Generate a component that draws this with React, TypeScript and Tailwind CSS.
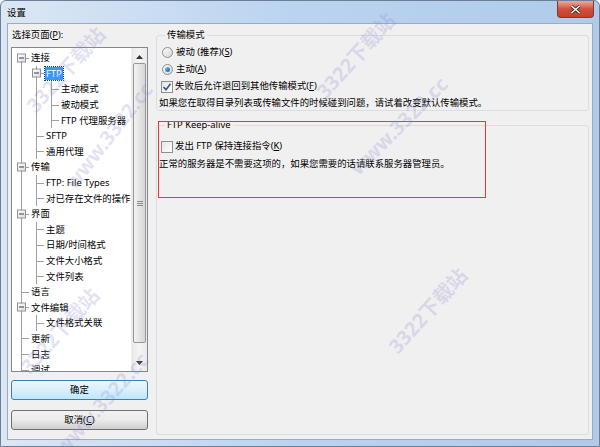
import React from 'react';

type Row = {
  label: string;
  level: number;
  expanded?: boolean;
  first?: boolean;
  last?: boolean;
  pass?: boolean[];
  selected?: boolean;
};

const ROWS: Row[] = [
  { label: '连接', level: 0, expanded: true, first: true },
  { label: 'FTP', level: 1, expanded: true, pass: [true], selected: true },
  { label: '主动模式', level: 2, pass: [true, true] },
  { label: '被动模式', level: 2, pass: [true, true] },
  { label: 'FTP 代理服务器', level: 2, pass: [true, true], last: true },
  { label: 'SFTP', level: 1, pass: [true] },
  { label: '通用代理', level: 1, pass: [true], last: true },
  { label: '传输', level: 0, expanded: true },
  { label: 'FTP: File Types', level: 1, pass: [true] },
  { label: '对已存在文件的操作', level: 1, pass: [true], last: true },
  { label: '界面', level: 0, expanded: true },
  { label: '主题', level: 1, pass: [true] },
  { label: '日期/时间格式', level: 1, pass: [true] },
  { label: '文件大小格式', level: 1, pass: [true] },
  { label: '文件列表', level: 1, pass: [true], last: true },
  { label: '语言', level: 0 },
  { label: '文件编辑', level: 0, expanded: true },
  { label: '文件格式关联', level: 1, pass: [true], last: true },
  { label: '更新', level: 0 },
  { label: '日志', level: 0 },
  { label: '调试', level: 0, last: true },
];

// watermark stamps over the screenshot
const MARKS = [
  { text: '3322下载站', x: 118, y: 84, r: -48 },
  { text: 'www.3322.cc', x: 172, y: 150, r: -52 },
  { text: '3322下载站', x: 408, y: 70, r: -48 },
  { text: 'www.3322.cc', x: 462, y: 140, r: -45 },
  { text: '3322下载站', x: 112, y: 345, r: -48 },
  { text: 'www.3322.cc', x: 165, y: 418, r: -48 },
  { text: '3322下载站', x: 480, y: 325, r: -48 },
];

const font = "font-['Noto_Sans','Noto_Sans_CJK_SC',sans-serif]";

function Expander() {
  return (
    <span className="absolute left-[3px] top-1/2 -translate-y-1/2 w-[9px] h-[9px] border border-[#919191] bg-gradient-to-br from-white to-[#dcdcdc] flex items-center justify-center">
      <span className="w-[5px] h-px bg-[#2b3f5e]" />
    </span>
  );
}

function TreeRow({ row }: { row: Row }) {
  return (
    <div className="flex h-[15.6px] items-center">
      {Array.from({ length: row.level }).map((_, i) => (
        <div key={i} className="relative w-[15px] h-full shrink-0">
          {row.pass?.[i] && <div className="absolute left-[7px] top-0 bottom-0 w-px bg-[#a0a0a0]" />}
        </div>
      ))}
      <div className="relative w-[15px] h-full shrink-0">
        <div
          className={`absolute left-[7px] w-px bg-[#a0a0a0] ${row.first ? 'top-1/2' : 'top-0'} ${row.last ? 'bottom-0' : 'bottom-0'}`}
        />
        <div className="absolute left-[7px] right-0 top-1/2 h-px bg-[#a0a0a0]" />
        {row.expanded && <Expander />}
      </div>
      <span
        className={`ml-px px-[1px] leading-[13px] whitespace-nowrap ${
          row.selected ? 'bg-[#3399ff] text-white outline outline-1 outline-dotted outline-[#0b3f7a]' : 'text-black'
        }`}
      >
        {row.label}
      </span>
    </div>
  );
}

function Radio({ checked }: { checked?: boolean }) {
  return (
    <span className="w-[11px] h-[11px] shrink-0 rounded-full border border-[#8e8f8f] bg-gradient-to-br from-[#fafafa] to-[#d8d8d8] flex items-center justify-center">
      {checked && <span className="w-[5px] h-[5px] rounded-full bg-gradient-to-br from-[#7fcaf2] to-[#0c57a5]" />}
    </span>
  );
}

function Check({ checked }: { checked?: boolean }) {
  return (
    <span className="w-[12px] h-[12px] shrink-0 border border-[#8e8f8f] bg-gradient-to-br from-[#e4e4e4] to-white flex items-center justify-center">
      {checked && (
        <svg width="10" height="10" viewBox="0 0 10 10">
          <path d="M1.5 5 L4 7.8 L8.5 1.8" fill="none" stroke="#3d5287" strokeWidth="1.6" />
        </svg>
      )}
    </span>
  );
}

function ScrollArrow({ down }: { down?: boolean }) {
  return (
    <div className="h-[17px] flex items-center justify-center">
      <svg width="7" height="4" viewBox="0 0 7 4">
        <path d={down ? 'M0 0 L7 0 L3.5 4 Z' : 'M0 4 L7 4 L3.5 0 Z'} fill="#333" />
      </svg>
    </div>
  );
}

export default function App() {
  return (
    <div className={`relative w-[600px] h-[447px] overflow-hidden flex flex-col bg-gradient-to-r from-[#dbe7f4] via-[#b9d3f0] to-[#b0cbea] border border-[#6d7f96] rounded-t-[6px] text-[9.4px] ${font}`}>
      {/* title bar */}
      <div className="h-[22px] flex items-start justify-between shrink-0">
        <span className="pl-[6px] pt-[6px] leading-[12px] text-black">设置</span>
        <div className="mr-[5px] w-[37px] h-[17px] rounded-b-[4px] border border-t-0 border-[#7a3a36] bg-gradient-to-b from-[#e9a99b] via-[#d0513d] to-[#c23f2b] flex items-center justify-center">
          <svg width="11" height="9" viewBox="0 0 11 9">
            <path d="M1.5 1 L9.5 8 M9.5 1 L1.5 8" stroke="#4a1d17" strokeWidth="3" />
            <path d="M1.5 1 L9.5 8 M9.5 1 L1.5 8" stroke="#fff" strokeWidth="1.6" />
          </svg>
        </div>
      </div>

      {/* client area */}
      <div className="mx-[6px] mb-[6px] flex-1 flex bg-[#f0f0f0] border border-[#9aabc2] pl-[3px] pr-[3px] pt-[5px] pb-[4px] gap-[8px]">
        {/* left column */}
        <div className="w-[137px] flex flex-col shrink-0">
          <div className="leading-[12px] h-[12px] pl-px">选择页面(<u>P</u>):</div>
          <div className="mt-[6px] h-[325px] flex border border-[#828790] bg-white">
            <div className="flex-1 overflow-hidden pl-[2px] pt-[2px]">
              {ROWS.map((r) => (
                <TreeRow key={r.label} row={r} />
              ))}
            </div>
            <div className="w-[16px] flex flex-col bg-gradient-to-r from-[#e9e9e9] via-[#f4f4f4] to-[#e9e9e9] border-l border-[#ececec]">
              <ScrollArrow />
              <div className="mx-[1px] h-[280px] -mt-[2px] rounded-[2px] border border-[#979797] bg-gradient-to-r from-[#f3f3f3] to-[#d6d6d6] flex flex-col items-center justify-center gap-[1px]">
                <span className="w-[6px] h-px bg-[#8a8a8a]" />
                <span className="w-[6px] h-px bg-[#8a8a8a]" />
                <span className="w-[6px] h-px bg-[#8a8a8a]" />
              </div>
              <div className="flex-1" />
              <ScrollArrow down />
            </div>
          </div>
          <button className="mt-[8px] h-[20px] rounded-[3px] border border-[#3c7fb1] bg-gradient-to-b from-[#eaf6fd] via-[#d9f0fc] to-[#bee6fd] text-black leading-[12px]">
            确定
          </button>
          <button className="mt-[10px] h-[20px] rounded-[3px] border border-[#707070] bg-gradient-to-b from-[#f2f2f2] via-[#ebebeb] to-[#cfcfcf] text-black leading-[12px]">
            取消(<u>C</u>)
          </button>
        </div>

        {/* right column */}
        <div className="flex-1 flex flex-col">
          <fieldset className="border border-[#d5dfe5] rounded-[3px] h-[82px] px-[5px] pt-[3px]">
            <legend className="ml-[3px] px-[2px] leading-[12px]">传输模式</legend>
            <div className="flex items-center gap-[3px] h-[17px]">
              <Radio />
              <span>被动 (推荐)(<u>S</u>)</span>
            </div>
            <div className="flex items-center gap-[3px] h-[17px]">
              <Radio checked />
              <span>主动(<u>A</u>)</span>
            </div>
            <div className="flex items-center gap-[2px] h-[17px] -ml-px">
              <Check checked />
              <span>失败后允许退回到其他传输模式(<u>F</u>)</span>
            </div>
            <div className="h-[16px] flex items-center -ml-[3px]">
              如果您在取得目录列表或传输文件的时候碰到问题，请试着改变默认传输模式。
            </div>
          </fieldset>
          <fieldset className="mt-[8px] flex-1 border border-[#d5dfe5] rounded-[3px] px-[5px]">
            <legend className="ml-[3px] px-[2px] leading-[12px]">FTP Keep-alive</legend>
            <div className="flex items-center gap-[2px] h-[17px] mt-[7px] -ml-px">
              <Check />
              <span>发出 FTP 保持连接指令(<u>K</u>)</span>
            </div>
            <div className="h-[18px] flex items-center -ml-[3px]">
              正常的服务器是不需要这项的，如果您需要的话请联系服务器管理员。
            </div>
          </fieldset>
        </div>
      </div>

      {/* red annotation frame */}
      <div className="absolute left-[157px] top-[120px] w-[328px] h-[77px] border border-[#e8383d] pointer-events-none" />

      {/* watermarks */}
      {MARKS.map((m, i) => (
        <span
          key={i}
          className="absolute -translate-x-1/2 -translate-y-1/2 whitespace-nowrap text-[20px] font-bold text-[#8c8cd2]/25 pointer-events-none"
          style={{ left: m.x, top: m.y, transform: `translate(-50%, -50%) rotate(${m.r}deg)` }}
        >
          {m.text}
        </span>
      ))}
    </div>
  );
}
